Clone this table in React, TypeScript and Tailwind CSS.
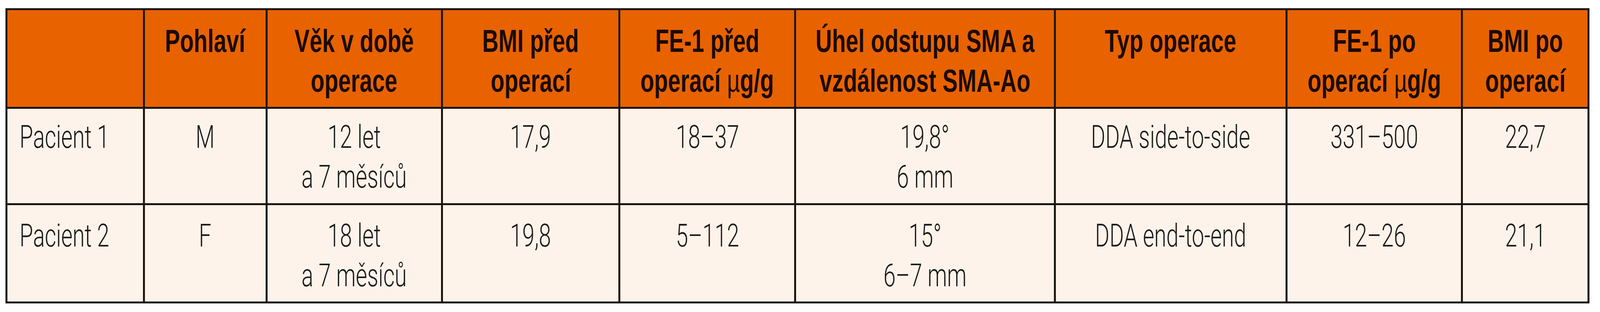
import React, { useEffect, useState } from "react";

// the reference was drawn at 4703px wide; columns are laid out in vw so the
// table keeps its proportions if the viewport ends up narrower than that
const REF_WIDTH = 4703;

const headers: React.ReactNode[][] = [
  [],
  ["Pohlaví"],
  ["Věk v době", "operace"],
  ["BMI před", "operací"],
  ["FE-1 před", <>operací <span className="font-normal">µ</span>g/g</>],
  ["Úhel odstupu SMA a", "vzdálenost SMA-Ao"],
  ["Typ operace"],
  ["FE-1 po", <>operací <span className="font-normal">µ</span>g/g</>],
  ["BMI po", "operací"],
];

const rows: string[][][] = [
  [
    ["Pacient 1"],
    ["M"],
    ["12 let", "a 7 měsíců"],
    ["17,9"],
    ["18–37"],
    ["19,8°", "6 mm"],
    ["DDA side-to-side"],
    ["331–500"],
    ["22,7"],
  ],
  [
    ["Pacient 2"],
    ["F"],
    ["18 let", "a 7 měsíců"],
    ["19,8"],
    ["5–112"],
    ["15°", "6–7 mm"],
    ["DDA end-to-end"],
    ["12–26"],
    ["21,1"],
  ],
];

const useWidthRatio = () => {
  const get = () => (typeof window === "undefined" ? 1 : Math.min(1, window.innerWidth / REF_WIDTH));
  const [k, setK] = useState(get);
  useEffect(() => {
    const onResize = () => setK(get());
    window.addEventListener("resize", onResize);
    return () => window.removeEventListener("resize", onResize);
  }, []);
  return k;
};

const App: React.FC = () => {
  const k = useWidthRatio();
  const headScale = { transform: `scaleX(${0.82 * k})` };
  const bodyScale = { transform: `scaleX(${0.8 * k})` };

  return (
    <div className="w-full overflow-hidden bg-white pt-[21px] pb-[22px] pl-[0.34vw]">
      <div className="grid w-max grid-cols-[8.463vw_7.548vw_10.844vw_10.972vw_10.865vw_16.096vw_14.374vw_10.844vw_7.782vw] grid-rows-[248px_242px_247px] gap-[5px] bg-[#1c1611] p-[5px] text-[81px] leading-[102px]">
        {headers.map((lines, i) => (
          <div
            key={`h${i}`}
            className="bg-[#e86200] pt-[28px] font-['Liberation_Sans',Arial,sans-serif] font-bold text-[#1a0b02]"
          >
            {lines.map((line, j) => (
              <div key={j} className="flex justify-center">
                <span className="inline-block origin-center whitespace-nowrap" style={headScale}>
                  {line}
                </span>
              </div>
            ))}
          </div>
        ))}
        {rows.map((row, r) =>
          row.map((cell, c) => (
            <div
              key={`r${r}c${c}`}
              className={`bg-[#fef3ea] font-['Roboto','Liberation_Sans',sans-serif] font-light text-[#1b1b1b] ${
                r === 0 ? "pt-[22px]" : "pt-[28px]"
              } ${c === 0 ? "pl-[0.765vw]" : ""}`}
            >
              {cell.map((line, j) => (
                <div key={j} className={`flex ${c === 0 ? "justify-start" : "justify-center"}`}>
                  <span
                    className={`inline-block whitespace-nowrap ${c === 0 ? "origin-left" : "origin-center"}`}
                    style={bodyScale}
                  >
                    {line}
                  </span>
                </div>
              ))}
            </div>
          ))
        )}
      </div>
    </div>
  );
};

export default App;
